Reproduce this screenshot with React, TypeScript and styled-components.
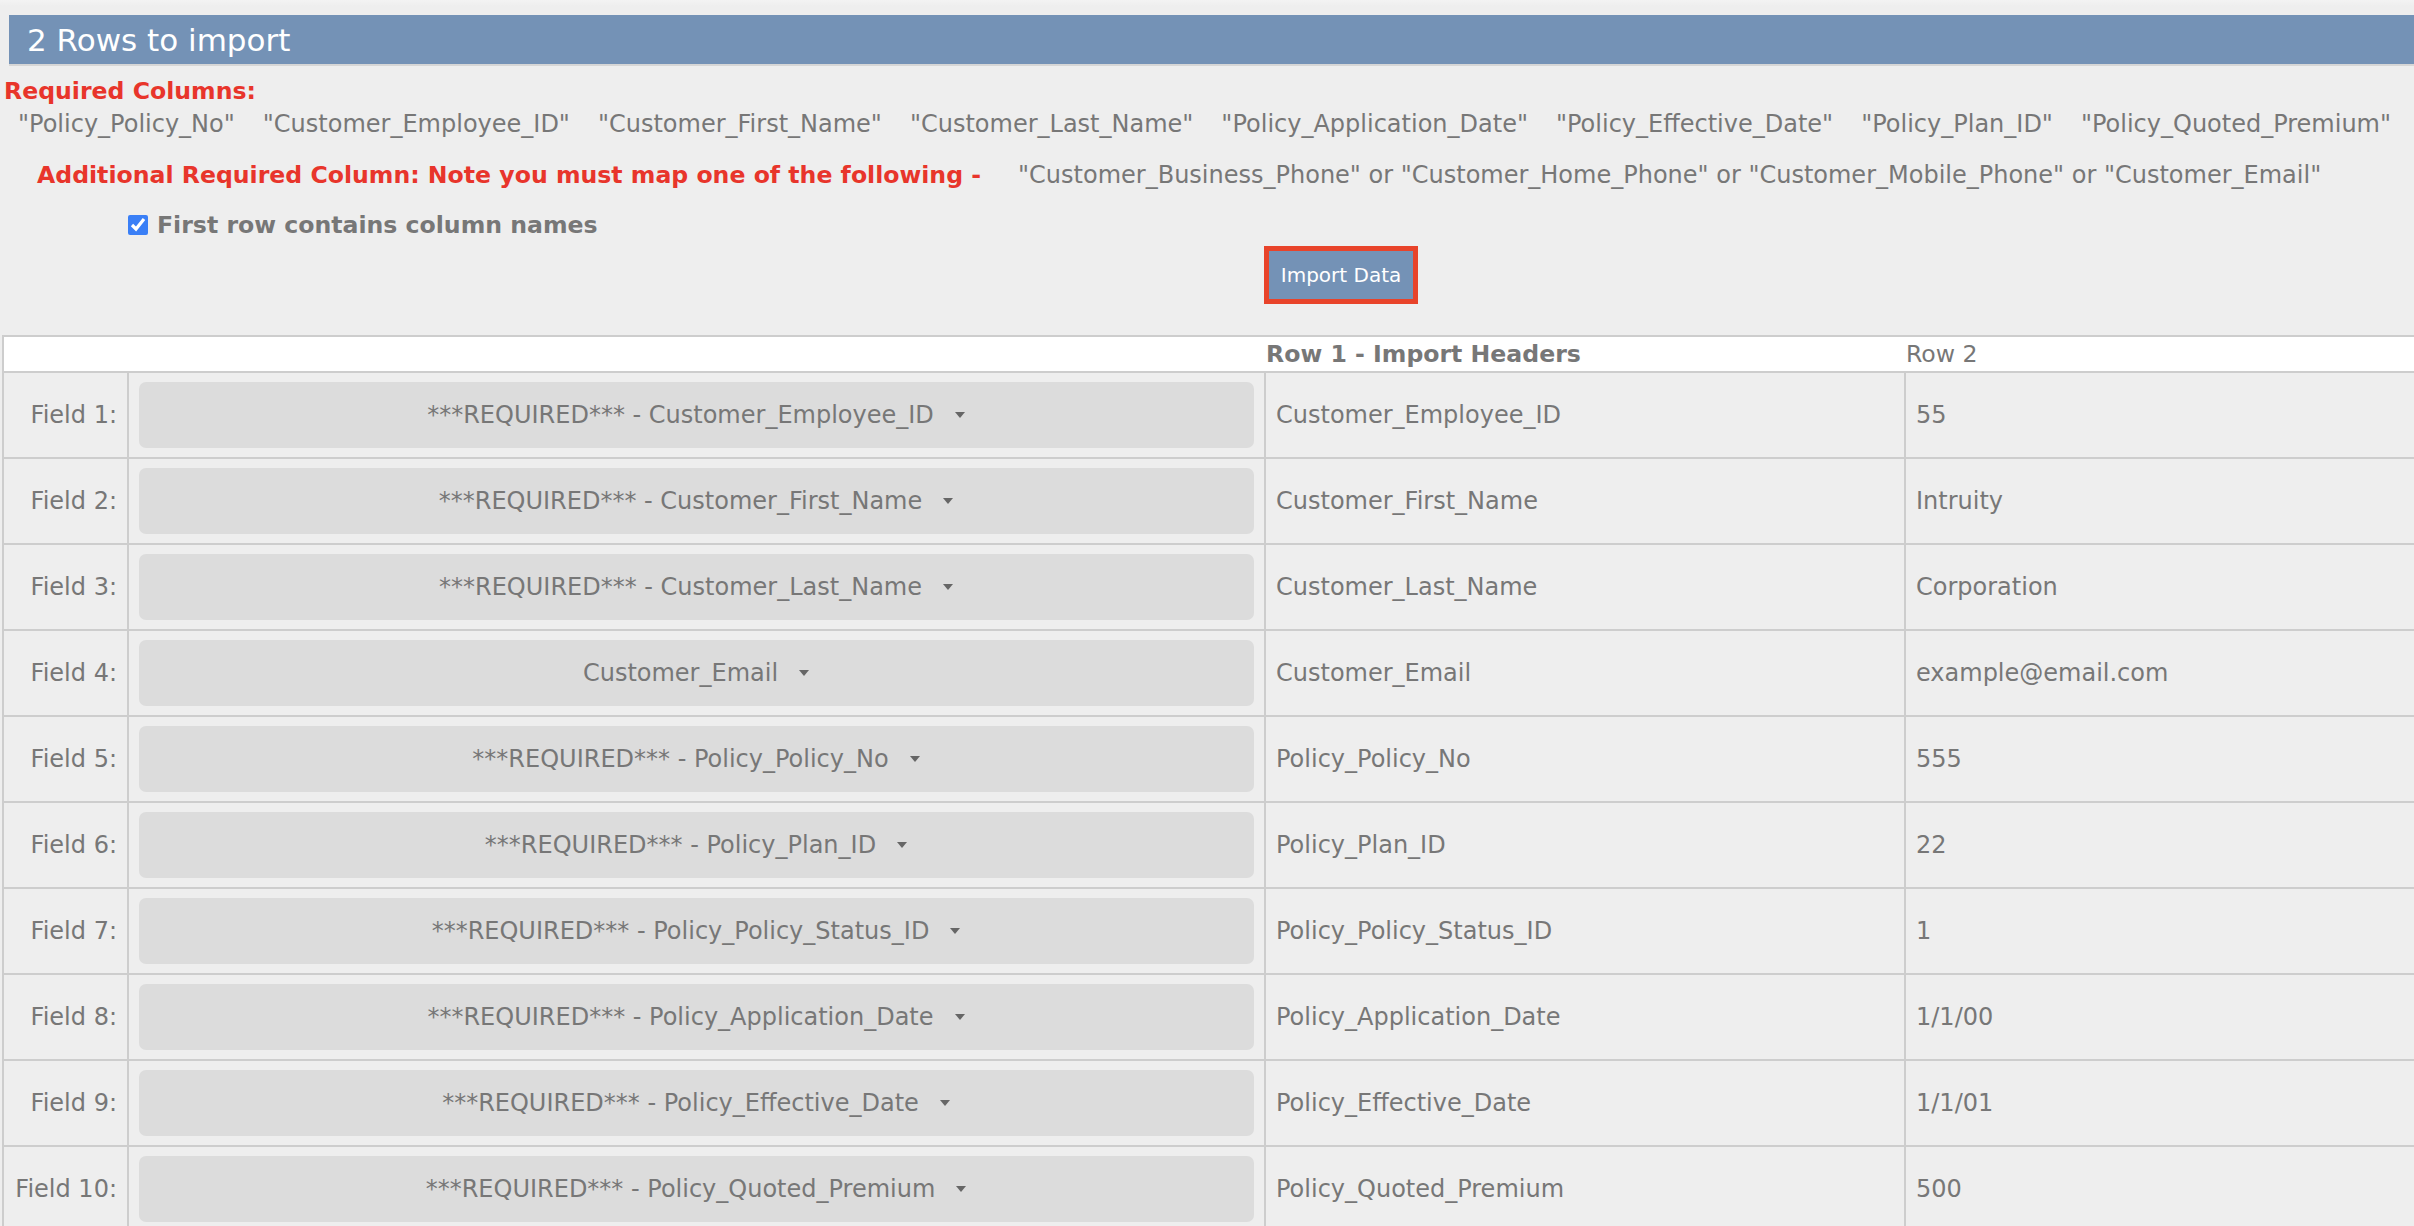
import React from 'react'
import styled, { createGlobalStyle } from 'styled-components';

const GlobalStyle = createGlobalStyle`
    html, body {
        margin: 0;
        padding: 0;
        background: #eeeeee;
        overflow: hidden;
    }
    body {
        font-family: "DejaVu Sans", Verdana, sans-serif;
        color: #777777;
    }
`

const Page = styled.div`
    width: 2682px;
    padding-top: 15px;
    background: linear-gradient(#f3f3f3 0, #eeeeee 6px);
`

const TitleBar = styled.div`
    margin-left: 9px;
    height: 49px;
    background-color: #7492b6;
    border-bottom: 2px solid #d6d6d6;
    display: flex;
    align-items: center;
    padding-left: 18px;
    h1 {
        margin: 0;
        font-size: 31px;
        font-weight: normal;
        color: #ffffff;
    }
`

const Notice = styled.div`
    padding-left: 4px;
    margin-top: 10px;
`

const RedLabel = styled.div<{ $indent?: number }>`
    color: #e8352b;
    font-weight: bold;
    font-size: 23.6px;
    line-height: 30px;
    padding-left: ${props => props.$indent || 0}px;
    white-space: nowrap;
`

const ColumnList = styled.div`
    display: flex;
    margin-top: 2px;
    font-size: 24px;
    line-height: 32px;
    white-space: nowrap;
    span {
        padding: 0 14px;
    }
`

const AdditionalRow = styled.div`
    display: flex;
    align-items: baseline;
    gap: 37px;
    margin-top: 20px;
    span {
        font-size: 24px;
        line-height: 30px;
        white-space: nowrap;
    }
`

const CheckRow = styled.label`
    display: flex;
    align-items: center;
    gap: 9px;
    margin-top: 20px;
    padding-left: 124px;
    font-size: 23.6px;
    line-height: 30px;
    font-weight: bold;
    input {
        width: 20px;
        height: 20px;
        margin: 0;
        accent-color: #3a7ff6;
    }
`

const ButtonRow = styled.div`
    display: flex;
    justify-content: center;
    margin-top: 6px;
`

const ImportBtn = styled.button`
    font-family: "DejaVu Sans", Verdana, sans-serif;
    font-size: 20px;
    color: #ffffff;
    background-color: #7492b6;
    border: 5px solid #e8432a;
    height: 58px;
    padding: 0 12px;
    cursor: pointer;
`

const Grid = styled.div`
    margin: 31px 0 0 2px;
    border-left: 2px solid #cdcdcd;
    border-top: 2px solid #cdcdcd;
`

const Row = styled.div<{ $head?: boolean }>`
    display: grid;
    grid-template-columns: 123px 1137px 640px 1fr;
    height: ${props => props.$head ? 34 : 84}px;
    background-color: ${props => props.$head ? '#ffffff' : '#eeeeee'};
    border-bottom: 2px solid #cdcdcd;
`

const HeadCell = styled.div<{ $bold?: boolean }>`
    font-size: 23.6px;
    line-height: 34px;
    font-weight: ${props => props.$bold ? 'bold' : 'normal'};
    padding-left: 2px;
    white-space: nowrap;
`

const FieldCell = styled.div`
    display: flex;
    align-items: center;
    justify-content: flex-end;
    padding-right: 10px;
    font-size: 24px;
    white-space: nowrap;
`

const Cell = styled.div<{ $pad?: boolean }>`
    display: flex;
    align-items: center;
    border-left: 2px solid #cdcdcd;
    padding: ${props => props.$pad ? '9px 10px' : '0 10px'};
    font-size: 24px;
    white-space: nowrap;
`

const Select = styled.div`
    flex: 1;
    height: 66px;
    border-radius: 7px;
    background-color: #dcdcdc;
    display: flex;
    align-items: center;
    justify-content: center;
    gap: 20px;
    font-size: 24px;
    color: #777777;
    svg {
        width: 12px;
        height: 8px;
    }
`

const required = [
    'Policy_Policy_No', 'Customer_Employee_ID', 'Customer_First_Name', 'Customer_Last_Name',
    'Policy_Application_Date', 'Policy_Effective_Date', 'Policy_Plan_ID', 'Policy_Quoted_Premium',
]

const rows = [
    { map: '***REQUIRED*** - Customer_Employee_ID', head: 'Customer_Employee_ID', value: '55' },
    { map: '***REQUIRED*** - Customer_First_Name', head: 'Customer_First_Name', value: 'Intruity' },
    { map: '***REQUIRED*** - Customer_Last_Name', head: 'Customer_Last_Name', value: 'Corporation' },
    { map: 'Customer_Email', head: 'Customer_Email', value: 'example@email.com' },
    { map: '***REQUIRED*** - Policy_Policy_No', head: 'Policy_Policy_No', value: '555' },
    { map: '***REQUIRED*** - Policy_Plan_ID', head: 'Policy_Plan_ID', value: '22' },
    { map: '***REQUIRED*** - Policy_Policy_Status_ID', head: 'Policy_Policy_Status_ID', value: '1' },
    { map: '***REQUIRED*** - Policy_Application_Date', head: 'Policy_Application_Date', value: '1/1/00' },
    { map: '***REQUIRED*** - Policy_Effective_Date', head: 'Policy_Effective_Date', value: '1/1/01' },
    { map: '***REQUIRED*** - Policy_Quoted_Premium', head: 'Policy_Quoted_Premium', value: '500' },
]

function Caret() {
    return (
        <svg viewBox="0 0 12 8">
            <path d="M1 1 L11 1 L6 7 Z" fill="#666666" />
        </svg>
    )
}

function App() {
    return (
        <>
            <GlobalStyle />
            <Page>
                <TitleBar>
                    <h1>2 Rows to import</h1>
                </TitleBar>
                <Notice>
                    <RedLabel>Required Columns:</RedLabel>
                    <ColumnList>
                        {required.map(c => <span key={c}>"{c}"</span>)}
                    </ColumnList>
                    <AdditionalRow>
                        <RedLabel $indent={33}>Additional Required Column: Note you must map one of the following -</RedLabel>
                        <span>"Customer_Business_Phone" or "Customer_Home_Phone" or "Customer_Mobile_Phone" or "Customer_Email"</span>
                    </AdditionalRow>
                    <CheckRow>
                        <input type="checkbox" defaultChecked />
                        First row contains column names
                    </CheckRow>
                </Notice>
                <ButtonRow>
                    <ImportBtn>Import Data</ImportBtn>
                </ButtonRow>
                <Grid>
                    <Row $head>
                        <HeadCell />
                        <HeadCell />
                        <HeadCell $bold>Row 1 - Import Headers</HeadCell>
                        <HeadCell>Row 2</HeadCell>
                    </Row>
                    {rows.map((r, i) => (
                        <Row key={i}>
                            <FieldCell>Field {i + 1}:</FieldCell>
                            <Cell $pad>
                                <Select>
                                    <span>{r.map}</span>
                                    <Caret />
                                </Select>
                            </Cell>
                            <Cell>{r.head}</Cell>
                            <Cell>{r.value}</Cell>
                        </Row>
                    ))}
                </Grid>
            </Page>
        </>
    )
}

export default App
